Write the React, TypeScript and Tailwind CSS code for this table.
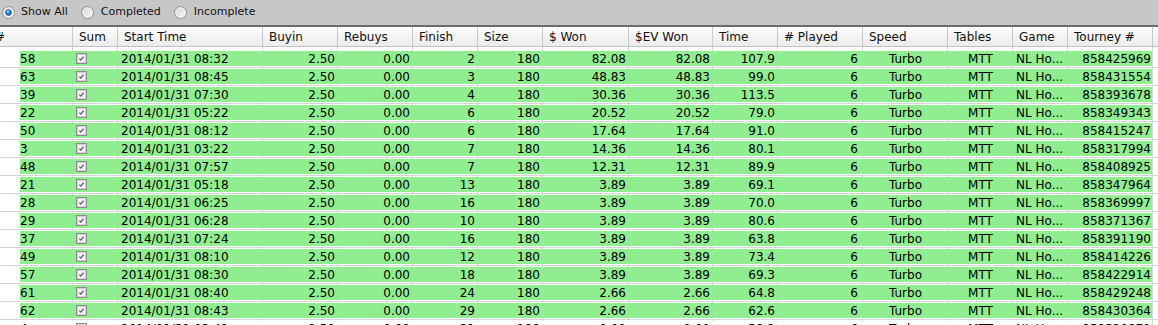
import React from "react";

// column layout shared by header and rows (widths include the 1px right grid line)
const columns = [
  { key: "num", w: "w-[53px]", align: "justify-start pl-0" },
  { key: "sum", w: "w-[45px]", align: "justify-start pl-[3px]" },
  { key: "start", w: "w-[145px]", align: "justify-start pl-[3px]" },
  { key: "buyin", w: "w-[75px]", align: "justify-end pr-[3px]" },
  { key: "rebuys", w: "w-[75px]", align: "justify-end pr-[3px]" },
  { key: "finish", w: "w-[65px]", align: "justify-end pr-[3px]" },
  { key: "size", w: "w-[65px]", align: "justify-end pr-[3px]" },
  { key: "won", w: "w-[86px]", align: "justify-end pr-[3px]" },
  { key: "ev", w: "w-[84px]", align: "justify-end pr-[3px]" },
  { key: "time", w: "w-[65px]", align: "justify-end pr-[3px]" },
  { key: "played", w: "w-[85px]", align: "justify-end pr-[5px]" },
  { key: "speed", w: "w-[85px]", align: "justify-center" },
  { key: "tables", w: "w-[65px]", align: "justify-center" },
  { key: "game", w: "w-[55px]", align: "justify-start pl-[3px]" },
  { key: "tourney", w: "w-[85px]", align: "justify-end pr-[1px]" },
];

const headers = [
  { label: "#", w: "w-[73px]" },
  { label: "Sum", w: "w-[45px]" },
  { label: "Start Time", w: "w-[145px]" },
  { label: "Buyin", w: "w-[75px]" },
  { label: "Rebuys", w: "w-[75px]" },
  { label: "Finish", w: "w-[65px]" },
  { label: "Size", w: "w-[65px]" },
  { label: "$ Won", w: "w-[86px]" },
  { label: "$EV Won", w: "w-[84px]" },
  { label: "Time", w: "w-[65px]" },
  { label: "# Played", w: "w-[85px]" },
  { label: "Speed", w: "w-[85px]" },
  { label: "Tables", w: "w-[65px]" },
  { label: "Game", w: "w-[55px]" },
  { label: "Tourney #", w: "w-[85px]" },
];

// num, time, finish, won, time played, tourney id
const raw: [string, string, string, string, string, string][] = [
  ["58", "08:32", "2", "82.08", "107.9", "858425969"],
  ["63", "08:45", "3", "48.83", "99.0", "858431554"],
  ["39", "07:30", "4", "30.36", "113.5", "858393678"],
  ["22", "05:22", "6", "20.52", "79.0", "858349343"],
  ["50", "08:12", "6", "17.64", "91.0", "858415247"],
  ["3", "03:22", "7", "14.36", "80.1", "858317994"],
  ["48", "07:57", "7", "12.31", "89.9", "858408925"],
  ["21", "05:18", "13", "3.89", "69.1", "858347964"],
  ["28", "06:25", "16", "3.89", "70.0", "858369997"],
  ["29", "06:28", "10", "3.89", "80.6", "858371367"],
  ["37", "07:24", "16", "3.89", "63.8", "858391190"],
  ["49", "08:10", "12", "3.89", "73.4", "858414226"],
  ["57", "08:30", "18", "3.89", "69.3", "858422914"],
  ["61", "08:40", "24", "2.66", "64.8", "858429248"],
  ["62", "08:43", "29", "2.66", "62.6", "858430364"],
  ["4", "03:41", "31", "0.00", "58.2", "858320871"],
];

function Radio({ checked }: { checked?: boolean }) {
  return (
    <svg width="13" height="13" viewBox="0 0 13 13" className="shrink-0">
      <defs>
        <linearGradient id={checked ? "rg1" : "rg0"} x1="0" y1="0" x2="1" y2="1">
          <stop offset="0" stopColor="#d4d4d4" />
          <stop offset="1" stopColor="#fbfbfb" />
        </linearGradient>
        <radialGradient id="dot" cx="0.4" cy="0.35" r="0.7">
          <stop offset="0" stopColor="#9fd0ff" />
          <stop offset="0.5" stopColor="#2f7fd0" />
          <stop offset="1" stopColor="#144a8c" />
        </radialGradient>
      </defs>
      <circle cx="6.5" cy="6.5" r="6" fill={`url(#${checked ? "rg1" : "rg0"})`} stroke="#8f8f8f" strokeWidth="1" />
      <circle cx="6.5" cy="6.5" r="4.6" fill="none" stroke="#f4f4f4" strokeWidth="0.8" />
      {checked && <circle cx="6.5" cy="6.5" r="3" fill="url(#dot)" stroke="#1c4f86" strokeWidth="0.5" />}
    </svg>
  );
}

function Check() {
  return (
    <svg width="11" height="11" viewBox="0 0 11 11" className="shrink-0">
      <rect x="0.5" y="0.5" width="10" height="10" fill="#e6e6e6" stroke="#8c8c8c" />
      <rect x="1.5" y="1.5" width="8" height="8" fill="#f3f3f3" stroke="#d2d2d2" />
      <path d="M3.4 5.6 L4.9 7.1 L7.6 3.6" fill="none" stroke="#4a5f78" strokeWidth="1.3" />
    </svg>
  );
}

function DataRow({ r, green, blank }: { r?: (typeof raw)[number]; green?: boolean; blank?: boolean }) {
  const values: Record<string, React.ReactNode> = r
    ? {
        num: r[0],
        sum: <Check />,
        start: `2014/01/31 ${r[1]}`,
        buyin: "2.50",
        rebuys: "0.00",
        finish: r[2],
        size: "180",
        won: r[3],
        ev: r[3],
        time: r[4],
        played: "6",
        speed: "Turbo",
        tables: "MTT",
        game: "NL Ho...",
        tourney: r[5],
      }
    : {};

  return (
    <div className={`flex shrink-0 ${blank ? "h-[3px]" : "h-[18px] border-b border-[#d5d5d5]"}`}>
      <div className="w-[20px] shrink-0" />
      {columns.map((c, i) => (
        <div key={c.key} className={`${c.w} shrink-0 h-full border-r border-[#d7d7d7]`}>
          {!blank && (
            <div
              className={`mt-[1px] h-[15px] flex items-center whitespace-nowrap overflow-visible ${c.align} ${
                green ? "bg-[#90ee90]" : "bg-white"
              } ${i < columns.length - 1 ? "-mr-[1px]" : ""}`}
            >
              {values[c.key]}
            </div>
          )}
        </div>
      ))}
    </div>
  );
}

export default function App() {
  return (
    <div className="w-[1158px] h-[325px] overflow-hidden bg-white font-['DejaVu_Sans',sans-serif] text-black">
      {/* filter bar */}
      <div className="h-[27px] bg-[#c7c7c7] border-b-2 border-[#6c6c6c] flex items-center pl-[2px] text-[11px] text-[#111]">
        <Radio checked />
        <span className="ml-[6px]">Show All</span>
        <span className="ml-[13px]">
          <Radio />
        </span>
        <span className="ml-[7px]">Completed</span>
        <span className="ml-[13px]">
          <Radio />
        </span>
        <span className="ml-[7px]">Incomplete</span>
      </div>

      {/* column header */}
      <div className="h-[20px] flex bg-linear-to-b from-[#fefefe] to-[#ebebeb] border-b border-[#c2c2c2] text-[12px] text-[#111]">
        {headers.map((h, i) => (
          <div
            key={h.label}
            className={`${h.w} shrink-0 h-full border-r border-[#c9c9c9] flex items-center whitespace-nowrap overflow-hidden ${
              i === 0 ? "pl-0" : "pl-[6px]"
            }`}
          >
            <span className={i === 0 ? "ml-[-5px]" : ""}>{h.label}</span>
          </div>
        ))}
      </div>

      {/* rows */}
      <div className="flex flex-col text-[12px]">
        <DataRow blank />
        {raw.map((r, i) => (
          <DataRow key={r[5]} r={r} green={i < 15} />
        ))}
      </div>
    </div>
  );
}
